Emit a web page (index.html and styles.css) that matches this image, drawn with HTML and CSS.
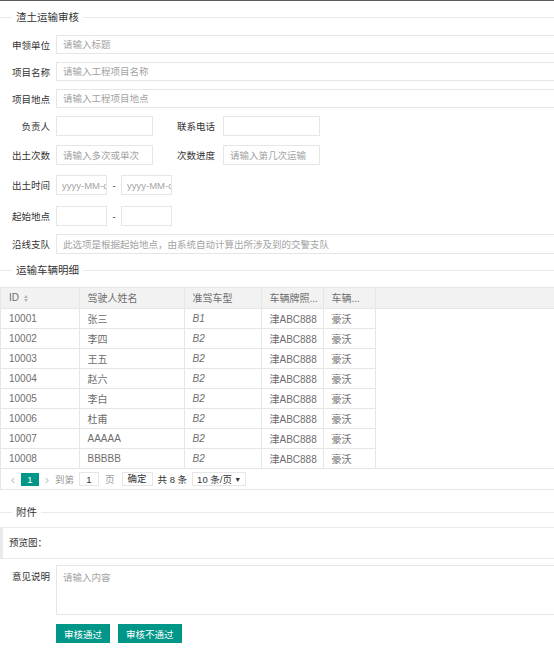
FILE: index.html
```html
<!DOCTYPE html>
<html lang="zh-CN">
<head>
    <meta charset="UTF-8" />
    <title>渣土运输审核</title>
    <link rel="stylesheet" href="styles.css">
</head>
<body>
    <div class="page">
        <div class="field-title"><span>渣土运输审核</span></div>

        <div class="form">
            <div class="row">
                <label class="lbl">申领单位</label>
                <input class="inp grow" type="text" placeholder="请输入标题" />
            </div>
            <div class="row">
                <label class="lbl">项目名称</label>
                <input class="inp grow" type="text" placeholder="请输入工程项目名称" />
            </div>
            <div class="row">
                <label class="lbl">项目地点</label>
                <input class="inp grow" type="text" placeholder="请输入工程项目地点" />
            </div>
            <div class="row row-lg">
                <label class="lbl">负责人</label>
                <input class="inp mid" type="text" />
                <label class="lbl2">联系电话</label>
                <input class="inp mid" type="text" />
            </div>
            <div class="row row-lg sp10">
                <label class="lbl">出土次数</label>
                <input class="inp mid" type="text" placeholder="请输入多次或单次" />
                <label class="lbl2">次数进度</label>
                <input class="inp mid" type="text" placeholder="请输入第几次运输" />
            </div>
            <div class="row row-lg sp11">
                <label class="lbl">出土时间</label>
                <input class="inp short" type="text" placeholder="yyyy-MM-dd" />
                <span class="dash">-</span>
                <input class="inp short" type="text" placeholder="yyyy-MM-dd" />
            </div>
            <div class="row row-lg sp8">
                <label class="lbl">起始地点</label>
                <input class="inp short" type="text" />
                <span class="dash">-</span>
                <input class="inp short" type="text" />
            </div>
            <div class="row row-lg">
                <label class="lbl">沿线支队</label>
                <input class="inp grow" type="text" placeholder="此选项是根据起始地点，由系统自动计算出所涉及到的交警支队" />
            </div>
        </div>

        <div class="field-title t2"><span>运输车辆明细</span></div>

        <div class="table-box">
            <table class="grid">
                <colgroup>
                    <col style="width:78px" />
                    <col style="width:105px" />
                    <col style="width:77px" />
                    <col style="width:62px" />
                    <col style="width:52px" />
                    <col />
                </colgroup>
                <thead>
                    <tr>
                        <th>ID <span class="sort"><i class="up"></i><i class="down"></i></span></th>
                        <th>驾驶人姓名</th>
                        <th>准驾车型</th>
                        <th>车辆牌照...</th>
                        <th>车辆...</th>
                        <th class="fill"></th>
                    </tr>
                </thead>
                <tbody id="rows"></tbody>
            </table>

            <div class="pager">
                <span class="arrow">&lsaquo;</span>
                <span class="cur">1</span>
                <span class="arrow">&rsaquo;</span>
                <span class="muted">到第</span>
                <input class="page-inp" type="text" value="1" />
                <span class="muted">页</span>
                <button class="ok">确定</button>
                <span>共 8 条</span>
                <span class="limit">10 条/页 <b>&#9660;</b></span>
            </div>
        </div>

        <div class="field-title t3"><span>附件</span></div>

        <div class="preview">预览图：</div>

        <div class="row row-area">
            <label class="lbl">意见说明</label>
            <textarea class="inp area grow" placeholder="请输入内容"></textarea>
        </div>

        <div class="actions">
            <button class="btn">审核通过</button>
            <button class="btn">审核不通过</button>
        </div>
    </div>

    <script>
        const data = [
            ["10001", "张三", "B1"],
            ["10002", "李四", "B2"],
            ["10003", "王五", "B2"],
            ["10004", "赵六", "B2"],
            ["10005", "李白", "B2"],
            ["10006", "杜甫", "B2"],
            ["10007", "AAAAA", "B2"],
            ["10008", "BBBBB", "B2"]
        ];
        const tbody = document.querySelector("#rows");
        data.forEach(d => {
            const tr = document.createElement("tr");
            tr.innerHTML = `
                <td>${d[0]}</td>
                <td>${d[1]}</td>
                <td><em>${d[2]}</em></td>
                <td>津ABC888</td>
                <td>豪沃</td>
                <td class="fill"></td>
            `;
            tbody.appendChild(tr);
        });
    </script>
</body>
</html>
```

FILE: styles.css
```css
* {
    box-sizing: border-box;
}
html, body {
    margin: 0;
    padding: 0;
}
body {
    font-family: "Liberation Sans", "Noto Sans CJK SC", sans-serif;
    font-size: 9.5px;
    color: #333;
    background: #fff;
    border-top: 1px solid #5c5c5c;
    overflow: hidden;
}
.page {
    width: 560px;
}
.field-title {
    display: flex;
    align-items: center;
    height: 15px;
    margin-top: 9px;
}
.field-title::before {
    content: "";
    width: 12px;
    border-top: 1px solid #eaeaea;
}
.field-title::after {
    content: "";
    flex: 1;
    border-top: 1px solid #eaeaea;
}
.field-title span {
    padding: 0 4px;
    font-size: 10.5px;
    line-height: 15px;
}
.field-title.t2 {
    margin-top: 9px;
}
.field-title.t3 {
    margin-top: 15px;
}
.form {
    margin-top: 10px;
}
.row {
    display: flex;
    align-items: center;
    height: 19px;
    margin-bottom: 8px;
}
.row.row-lg {
    height: 20px;
    margin-bottom: 9px;
}
.row.sp10 {
    margin-bottom: 10px;
}
.row.sp11 {
    margin-bottom: 11px;
}
.row.sp8 {
    margin-bottom: 8px;
}
.lbl {
    width: 50px;
    flex-shrink: 0;
    text-align: right;
    margin-right: 6px;
}
.lbl2 {
    width: 62px;
    text-align: right;
    margin-right: 8px;
}
.inp {
    height: 100%;
    border: 1px solid #e6e6e6;
    padding: 0 6px;
    font: inherit;
    color: #333;
    background: #fff;
    outline: none;
}
.inp::placeholder {
    color: #a3a3a3;
}
.grow {
    flex: 1;
    min-width: 0;
}
.mid {
    width: 97px;
}
.short {
    width: 51px;
    padding: 0 0 0 5px;
}
.dash {
    width: 14px;
    text-align: center;
}
.table-box {
    margin-top: 9px;
    border: 1px solid #e6e6e6;
}
.grid {
    width: 100%;
    border-collapse: collapse;
    table-layout: fixed;
    color: #6e6e6e;
    font-size: 10px;
}
.grid th, .grid td {
    height: 20px;
    padding: 0 8px;
    text-align: left;
    font-weight: normal;
    white-space: nowrap;
    overflow: hidden;
    border-right: 1px solid #e6e6e6;
    border-bottom: 1px solid #e6e6e6;
}
.grid th {
    background: #f2f2f2;
}
.grid th.fill {
    border-right: none;
}
.grid td.fill {
    border: none;
}
.grid tbody tr:last-child td {
    border-bottom: none;
}
.grid em {
    font-style: italic;
}
.sort {
    display: inline-flex;
    flex-direction: column;
    vertical-align: middle;
    margin-left: 2px;
    gap: 1px;
}
.sort i {
    width: 0;
    height: 0;
    border-left: 2px solid transparent;
    border-right: 2px solid transparent;
}
.sort .up {
    border-bottom: 3px solid #b5b5b5;
}
.sort .down {
    border-top: 3px solid #b5b5b5;
}
.pager {
    display: flex;
    align-items: center;
    height: 21px;
    padding-left: 7px;
    border-top: 1px solid #e6e6e6;
    font-size: 9.5px;
}
.arrow {
    color: #c2c2c2;
    font-size: 13px;
    line-height: 13px;
    width: 10px;
    text-align: center;
}
.cur {
    width: 18px;
    height: 13px;
    line-height: 13px;
    margin: 0 3px;
    background: #009688;
    color: #fff;
    text-align: center;
}
.muted {
    color: #999;
}
.pager .arrow + .muted {
    margin-left: 3px;
}
.page-inp {
    width: 20px;
    height: 14px;
    margin: 0 6px 0 5px;
    border: 1px solid #e6e6e6;
    font: inherit;
    text-align: center;
    color: #333;
    padding: 0;
}
.ok {
    height: 14px;
    margin: 0 5px 0 7px;
    padding: 0 5px;
    border: 1px solid #e6e6e6;
    background: #fff;
    font: inherit;
    color: #333;
    line-height: 12px;
}
.limit {
    display: flex;
    align-items: center;
    justify-content: space-between;
    width: 54px;
    height: 14px;
    margin-left: 5px;
    padding: 0 4px;
    border: 1px solid #e6e6e6;
    color: #333;
}
.limit b {
    font-size: 7px;
    font-weight: normal;
}
.preview {
    margin-top: 7px;
    height: 32px;
    line-height: 30px;
    padding-left: 6px;
    border: 1px solid #eaeaea;
    border-left-width: 3px;
}
.row.row-area {
    align-items: flex-start;
    height: 50px;
    margin-top: 6px;
    margin-bottom: 9px;
}
.row-area .lbl {
    padding-top: 4px;
}
.area {
    height: 50px;
    padding-top: 4px;
    resize: none;
}
.actions {
    display: flex;
    gap: 8px;
    padding-left: 56px;
}
.btn {
    height: 19px;
    padding: 0 8px;
    border: none;
    background: #009688;
    color: #fff;
    font: inherit;
    cursor: pointer;
}
```
